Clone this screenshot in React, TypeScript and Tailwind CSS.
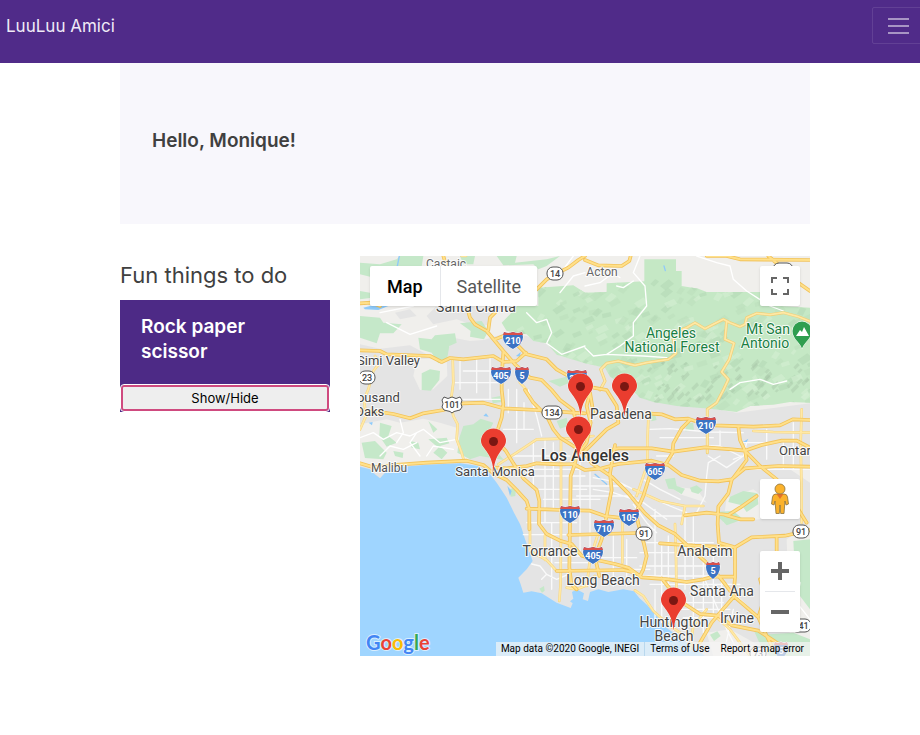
import React from "react";

/* ---------- Map geometry (drawn on a 1350 x 1200 plane) ---------- */

const OCEAN =
  "M0 632 L30 640 45 655 60 667 80 645 130 632 200 626 300 622 355 630 385 648 410 680 440 725 462 770 480 804 486 820 495 850 508 885 518 915 500 940 475 965 482 985 490 1010 515 1006 545 1012 590 1040 632 1056 638 1042 630 1036 640 1028 636 1008 650 1000 672 1012 668 1030 684 1035 690 1008 715 1000 745 1008 790 1000 822 1006 838 1026 862 1048 890 1080 915 1112 940 1130 975 1158 1010 1180 1035 1200 0 1200Z";

const FOREST =
  "M535 95 L640 88 675 110 740 108 740 82 853 76 853 10 948 10 948 45 965 45 965 90 1015 98 1040 108 1200 108 1260 150 1350 155 1350 440 1290 438 1240 446 1170 450 1130 468 1050 458 950 450 880 438 840 425 815 402 780 380 750 362 735 335 675 322 620 305 590 296 560 262 520 255 500 235 440 225 425 200 450 175 480 140 535 150Z";

const PARKS = [
  "M0 20 L60 25 110 10 120 0 190 0 185 32 110 38 60 70 0 55Z",
  "M300 0 L345 0 340 25 310 25Z",
  "M410 0 L470 0 465 20 560 10 600 0 560 30 535 40 520 25 430 28Z",
  "M0 180 L60 185 70 200 125 205 100 232 60 232 50 262 0 245Z",
  "M175 245 L215 250 225 238 285 232 290 260 268 270 262 305 235 322 215 290 180 280Z",
  "M300 202 L365 195 385 225 372 250 330 242 332 225Z",
  "M185 352 L210 340 240 345 238 372 212 404 185 402Z",
  "M0 105 L30 110 30 126 0 130Z",
  "M310 510 L340 505 362 488 400 500 385 530 412 590 432 612 360 600 330 610 292 590 298 545Z",
  "M5 560 L45 555 80 590 70 610 15 606Z",
  "M60 500 L95 510 85 540 110 560 80 572 58 540Z",
  "M150 555 L175 560 180 580 155 575Z",
  "M205 495 L232 520 220 530Z",
  "M205 550 L260 545 268 562 240 570 262 590 245 610 220 590 235 575Z",
  "M100 585 L130 590 128 606 105 600Z",
  "M395 425 L420 420 425 438 398 442Z",
  "M565 375 L620 362 640 375 600 392Z",
  "M590 495 L620 485 625 510 600 518Z",
  "M915 670 L945 665 950 690 975 698 965 715 940 700 925 698Z",
  "M990 695 L1010 688 1028 702 1015 714 995 708Z",
  "M982 502 L1000 500 1002 524 975 526Z",
  "M1110 722 L1150 705 1192 712 1195 745 1160 768 1145 748 1105 738Z",
  "M1060 768 L1120 765 1150 790 1100 808Z",
  "M1300 855 L1350 850 1350 1060 1320 1020 1305 950Z",
  "M1050 1136 L1072 1126 1082 1140 1062 1155Z",
  "M538 998 L552 990 554 1004 546 1010Z",
  "M1180 1120 L1230 1135 1300 1130 1350 1150 1350 1200 1230 1200 1200 1165Z",
  "M870 480 L885 475 890 492 875 496Z",
  "M450 700 L468 692 466 720 452 722Z",
];

const URBAN = [
  "M0 265 L60 278 150 268 210 300 260 290 280 245 330 255 372 252 440 230 500 240 560 265 600 300 735 335 830 418 1130 470 1350 442 1350 1200 0 1200Z",
  "M230 150 L300 165 330 150 400 175 385 205 360 215 290 190 220 205 200 180Z",
  "M105 170 L150 160 170 180 120 190Z",
];

const TERRAIN = [
  "M0 505 L80 490 120 500 190 488 240 500 290 515 300 560 330 612 240 622 100 630 0 628Z",
  "M170 310 L260 305 262 360 220 400 180 402 160 360Z",
  "M930 690 L1010 700 1040 740 960 715Z",
  "M1100 725 L1180 700 1230 740 1200 790 1090 800Z",
  "M1290 640 L1350 640 1350 680Z",
  "M1040 1130 L1110 1120 1200 1170 1200 1200 1060 1200Z",
  "M1280 850 L1350 800 1350 1200 1290 1160Z",
];

const STREETS =
  "M285 380 H430 M300 310 V400 M350 310 V410 M390 305 V430 M300 430 H420 M310 345 H400 M445 400 V470 M470 400 V560 M430 520 H520 M492 440 V520 M505 402 L530 480 545 540 M450 600 H630 M480 640 H675 M520 560 V700 M555 550 V800 M580 560 V760 M500 660 H675 M520 700 H680 M550 730 H720 M500 800 H650 M660 620 V900 M690 640 V880 M640 690 H800 M650 720 H820 M490 836 H620 M575 800 V1000 M515 924 L540 930 560 955 590 970 625 955 M560 900 H660 M585 920 H700 M545 970 L560 955 M700 665 L780 680 850 715 930 750 980 770 M700 700 L760 710 850 740 920 790 M850 670 L900 700 960 730 M820 745 L860 800 890 830 M870 780 H990 M885 760 V960 M860 860 H1060 M840 890 H1040 M840 930 H1080 M820 960 H1110 M870 985 H1140 M885 1000 V1090 M905 870 V1100 M925 840 V1040 M975 780 V1000 M1000 770 V1100 M1030 870 V1130 M1060 880 V1080 M1085 960 V1060 M960 1040 H1090 M950 1060 H1110 M970 1085 H1080 M1110 1000 L1160 1050 M1040 660 L1045 620 1080 600 M1040 660 L1035 720 1010 770 M1045 600 L1100 635 1150 600 M870 520 L930 518 1050 528 1150 530 M1080 525 V570 L1140 600 M1080 570 L1040 570 M1120 610 L1145 600 M1160 560 L1150 600 M1160 640 H1350 M1220 520 V610 M1270 640 V560 M1300 500 V640 M1150 560 H1240 M900 545 H1060 M890 600 H940 M1030 960 L1100 1120 1130 1180 M1120 1060 L1090 1200 M675 905 H830 M760 840 V990 M800 850 V990 M700 940 H870";

const TRAILS =
  "M840 0 L820 50 855 90 860 150 820 200 820 240 780 270 740 295 700 300 675 275 M820 75 L790 95 770 90 M1010 0 L1070 20 1110 30 1120 70 1160 105 1230 150 1270 165 M675 90 L720 80 760 50 780 65 M740 295 L850 300 920 305 M500 170 L530 200 560 190 575 230 560 262 605 295 675 270 M1110 400 L1140 380 1200 370 1240 385 1280 375 M600 110 L640 60 675 50 M610 40 L640 0 M0 545 L40 530 70 550 110 530 150 540 190 520 240 560 290 550 M60 600 L90 570 130 580 170 560 M120 490 L130 530 110 560 M170 530 L150 560 180 600 M200 600 L220 570 280 580 M1290 940 L1320 980 1310 1040 1350 1090 M80 200 L150 235 230 210 M60 170 L160 150";

const MINOR = [
  "M318 0 L305 0",
  "M45 300 L60 320 40 345 25 400 12 430 18 480 0 520",
  "M278 306 L280 380 272 440 280 480 293 505 290 550 305 590 312 615",
  "M500 402 L480 380 470 330",
  "M415 625 L470 590 530 550 640 547 700 540",
  "M603 552 V804 L602 980 598 1035",
  "M510 804 V885 L560 912 590 945 630 945",
  "M555 838 V912",
  "M620 995 L650 1000 675 990 705 960",
  "M865 490 L862 560 862 625 830 720",
  "M787 780 V920",
  "M945 804 L948 900 950 1060",
  "M1040 1060 L1000 1110 990 1180",
  "M1065 1080 L1110 1120 1170 1200",
  "M712 840 L690 910 680 990",
  "M1325 460 L1322 560 1325 720 1325 800",
  "M1180 525 L1240 528 1350 530",
  "M820 700 L900 735 975 750 1030 750 M975 750 L965 804",
  "M825 1003 L850 1020 880 1065 930 1110 960 1130",
];

const MOUNTAIN =
  "M720 402 L735 375 722 340 740 322 775 315 800 322 825 328 860 320 925 310 948 292 940 250 955 225 980 215 1005 200 1035 218 1060 205 1090 190 1110 200 1140 212 1155 205 1160 185 1190 172 1230 176 1270 170 1315 182 1350 196 M1100 196 L1095 250 1122 262 1108 310 1085 348 1105 370 1090 402 1070 440 1042 460 1042 590";

const HIGHWAYS = [
  "M250 0 L262 40 290 100 320 150 330 185 345 205 380 225 405 255 430 285 465 325 510 365 545 372 575 402 600 432 640 462 650 510 675 545",
  "M0 283 L60 285 80 295 210 300 245 318 270 306 310 310 400 300 430 318 470 315 498 290",
  "M0 142 L35 140 60 150",
  "M675 0 L655 12 625 35 590 52 560 70 530 100 M405 170 L390 185 385 222",
  "M675 12 L715 28 785 30 808 15 812 0",
  "M1040 0 L1100 0 1140 10 1350 12",
  "M1225 0 L1260 30 1300 70 1350 105",
  "M405 250 L430 240 465 260 500 295 560 310 590 340 625 360 665 385 690 410 700 470 M860 472 L905 475 945 490 985 488 1020 500 1060 508 1180 512 1260 508 1298 490 1350 492",
  "M700 395 L740 402 770 450 775 500",
  "M430 290 L425 360 425 402 430 445 425 485 412 525 415 560 437 584 460 622 490 667 530 702 538 735 537 804 560 834 600 854 635 864 665 899 710 912 765 924 805 935 845 964 925 970 980 978 1030 970 1060 962 1120 962",
  "M905 967 L935 1005 975 1045 1020 1074 1075 1079 1115 1108 1195 1124 1235 1150 1280 1180",
  "M0 462 L60 468 100 474 150 487 190 472 250 462 310 442 370 440 430 457 530 462 640 470 675 472",
  "M0 622 L40 634 100 627 200 620 320 614 370 627 400 652 440 672 470 702 500 735 508 760 508 820",
  "M405 635 L440 637 500 630 530 622 600 625 640 624 675 642 725 637 775 624 875 614 925 627 965 657 1020 674 1075 676 1115 670 1155 637 1255 630 1350 632",
  "M760 580 L775 577 875 577 940 587 1035 574 1115 580 1155 584 1205 567 1265 554 1310 554 1350 575",
  "M990 492 L965 517 940 562 937 592 915 627 870 657 850 720 828 770 835 804 852 864 860 900 850 940 840 960",
  "M1135 512 L1140 552 1155 584 1160 612 1115 672 1105 712 1075 752 1073 804 1077 860 1120 872",
  "M1155 584 L1200 630 1250 670 1290 720 1340 800",
  "M625 837 L830 831 M900 862 L1005 869 1125 874 1175 844 1275 839 1350 822",
  "M495 402 L520 440 560 480 580 520 600 545 640 570 680 600 695 622 755 662 805 712 855 772 895 808 945 834 1005 889 1055 934 1095 984 1125 1024 1195 1084 1220 1140 1240 1180",
  "M690 410 L680 450 692 500 680 560 650 600 642 632 632 660 630 804 628 934 634 984 650 1000",
  "M775 500 L740 520 700 560 670 590",
  "M765 567 L750 652 755 702 745 752 735 804 725 850 705 904 718 960",
  "M500 758 L560 760 605 762 690 764 735 780 795 787",
  "M975 778 L1040 770 1105 777 1140 755 1190 720",
  "M590 945 L790 942 825 950",
  "M1125 874 L1125 964 1120 1024 1080 1070 1055 1100 1020 1160",
  "M1250 845 V950 M1195 1084 L1215 1020 1200 970",
  "M1095 777 L1140 790 1180 790",
];

/* Relief facets scattered over the forest */
const RELIEF = Array.from({ length: 260 }, (_, i) => {
  const x = 440 + ((i * 137) % 910);
  const y = 70 + ((i * 89 + i * i * 3) % 390);
  const a = 10 + ((i * 17) % 22);
  const b = 6 + ((i * 11) % 16);
  return {
    d: `M${x} ${y} l${a} ${-b} l${b - 4} ${a / 2} l${-a} ${b}Z`,
    fill: i % 3 === 0 ? "#d4eed2" : i % 3 === 1 ? "#b4d9b5" : "#bcdfbd",
  };
});

const SHADOWS = Array.from({ length: 60 }, (_, i) => {
  const x = 860 + ((i * 97 + i * i * 7) % 480);
  const y = 320 + ((i * 41 + i * i * 5) % 125);
  const a = 6 + ((i * 13) % 14);
  return `M${x} ${y} l${a} ${-a} l6 ${a / 2} l${-a} ${a}Z`;
});

/* ---------- Map parts ---------- */

type Place = { x: number; y: number; text: string; size?: number; fill?: string; weight?: number; anchor?: "start" | "middle" };

const PLACES: Place[] = [
  { x: 86, y: 12, text: "Castaic", size: 12, fill: "#666666" },
  { x: 116, y: 56, text: "Santa Clarita", size: 14 },
  { x: 242, y: 20, text: "Acton", size: 12, fill: "#666666" },
  { x: 311, y: 82, text: "Angeles", fill: "#1a7f43", size: 14 },
  { x: 312, y: 96, text: "National Forest", fill: "#1a7f43", size: 14 },
  { x: 408, y: 78, text: "Mt San", fill: "#1a7f43", size: 14 },
  { x: 405, y: 92, text: "Antonio", fill: "#1a7f43", size: 14 },
  { x: -3, y: 109, text: "Simi Valley", size: 13, anchor: "start" },
  { x: -18, y: 146, text: "Thousand", size: 13, anchor: "start" },
  { x: -5, y: 160, text: "Oaks", size: 13, anchor: "start" },
  { x: 29, y: 216, text: "Malibu", size: 12, fill: "#555555" },
  { x: 135, y: 220, text: "Santa Monica", size: 13 },
  { x: 261, y: 163, text: "Pasadena", size: 14 },
  { x: 225, y: 205, text: "Los Angeles", size: 16, weight: 500, fill: "#333333" },
  { x: 419, y: 199, text: "Ontario", anchor: "start", size: 13 },
  { x: 190, y: 300, text: "Torrance", size: 14 },
  { x: 345, y: 300, text: "Anaheim", size: 14 },
  { x: 243, y: 329, text: "Long Beach", size: 14 },
  { x: 362, y: 340, text: "Santa Ana", size: 14 },
  { x: 377, y: 367, text: "Irvine", size: 14 },
  { x: 314, y: 371, text: "Huntington", size: 14 },
  { x: 314, y: 385, text: "Beach", size: 14 },
];

const INTERSTATES = [
  { x: 153, y: 84, n: "210" },
  { x: 141, y: 119, n: "405" },
  { x: 162, y: 119, n: "5" },
  { x: 217, y: 122, n: "210" },
  { x: 346, y: 169, n: "210" },
  { x: 295, y: 215, n: "605" },
  { x: 210, y: 258, n: "110" },
  { x: 269, y: 261, n: "105" },
  { x: 244, y: 272, n: "710" },
  { x: 233, y: 299, n: "405" },
  { x: 353, y: 314, n: "5" },
  { x: 421, y: 394, n: "5" },
];

const STATE_ROUTES = [
  { x: 195, y: 17, n: "14" },
  { x: 423, y: 13, n: "138" },
  { x: 7, y: 121, n: "23" },
  { x: 192, y: 156, n: "134" },
  { x: 284, y: 277, n: "91" },
  { x: 441, y: 275, n: "91" },
  { x: 441, y: 369, n: "241" },
  { x: 398, y: 397, n: "73" },
];

function Interstate({ x, y, n }: { x: number; y: number; n: string }) {
  const w = n.length > 1 ? 10 : 7;
  return (
    <g transform={`translate(${x} ${y})`}>
      <path
        d={`M${-w + 1} -8 Q${-w / 2} -6 0 -8 Q${w / 2} -6 ${w - 1} -8 L${w} -3 Q${w} 4 0 9 Q${-w} 4 ${-w} -3Z`}
        fill="#3b73c4"
        stroke="#ffffff"
        strokeWidth="1"
        paintOrder="stroke"
      />
      <path d={`M${-w + 1} -8 Q${-w / 2} -6 0 -8 Q${w / 2} -6 ${w - 1} -8 L${w} -5 H${-w}Z`} fill="#d9504c" />
      <text y="4" textAnchor="middle" fontSize="9" fontWeight="700" fill="#ffffff">
        {n}
      </text>
    </g>
  );
}

function StateRoute({ x, y, n }: { x: number; y: number; n: string }) {
  const w = n.length > 2 ? 20 : 16;
  return (
    <g transform={`translate(${x} ${y})`}>
      <rect x={-w / 2} y="-6" width={w} height="13" rx="6" fill="#ffffff" stroke="#555555" />
      <text y="4" textAnchor="middle" fontSize="9" fontWeight="500" fill="#444444">
        {n}
      </text>
    </g>
  );
}

function Pin({ x, y }: { x: number; y: number }) {
  return (
    <g transform={`translate(${x} ${y})`}>
      <path
        d="M0.500 2 C-0.500 -11 -4 -15 -7.500 -20 C-10.500 -24 -12 -26 -12 -29 A12.500 12.500 0 0 1 13 -29 C13 -26 11.500 -24 8.500 -20 C5 -15 1.500 -11 0.500 2Z"
        fill="#ea3d2f"
        stroke="#ffffff"
        strokeOpacity="0.7"
        strokeWidth="1"
        paintOrder="stroke"
      />
      <circle cx="0.500" cy="-28.500" r="4.500" fill="#7a1712" />
    </g>
  );
}

function MapCanvas() {
  return (
    <svg
      viewBox="0 0 450 400"
      preserveAspectRatio="xMidYMid slice"
      className="block h-full w-full font-[Roboto,'Liberation_Sans',sans-serif]"
      role="img"
      aria-label="Map of Los Angeles"
    >
      <defs>
        <clipPath id="forest">
          <path d={FOREST} />
        </clipPath>
      </defs>
      <g transform="scale(0.33333)" strokeLinejoin="round" strokeLinecap="round" fill="none">
        <rect width="1350" height="1200" fill="#f0efec" />
        {URBAN.map((d) => (
          <path key={d} d={d} fill="#e4e4e4" />
        ))}
        {TERRAIN.map((d) => (
          <path key={d} d={d} fill="#f0efec" />
        ))}
        {PARKS.map((d) => (
          <path key={d} d={d} fill="#c5e8c9" />
        ))}
        <path d={FOREST} fill="#c5e8c5" />
        <g clipPath="url(#forest)">
          {RELIEF.map((r) => (
            <path key={r.d} d={r.d} fill={r.fill} opacity="0.6" />
          ))}
          {SHADOWS.map((d) => (
            <path key={d} d={d} fill="#a6c3a4" opacity="0.4" />
          ))}
        </g>
        <path d={OCEAN} fill="#9fd5ff" />
        <path
          d="M10 155 L50 145 85 150 55 162 15 160Z M370 480 L378 472 386 482Z M468 300 L482 288 480 302Z M442 690 L455 705 450 720Z M1145 560 L1165 548 1158 562Z M26 500 L38 498 36 508Z"
          fill="#8fcbfa"
        />
        <path d="M118 0 L112 30 125 55 M705 655 L740 685 M912 30 L916 44" stroke="#90caf9" strokeWidth="4" />
        <path d={TRAILS} stroke="#ffffff" strokeWidth="4" />
        <path d={STREETS} stroke="#fafafa" strokeWidth="4" />
        <path d={MOUNTAIN} stroke="#f0cf78" strokeWidth="9" />
        <path d={MOUNTAIN} stroke="#ffe8a4" strokeWidth="5" />
        <path d={MINOR.join(" ")} stroke="#f6d582" strokeWidth="8" />
        <path d={MINOR.join(" ")} stroke="#ffe9a6" strokeWidth="5" />
        <path d={HIGHWAYS.join(" ")} stroke="#f2c35b" strokeWidth="11" />
        <path d={HIGHWAYS.join(" ")} stroke="#ffe08a" strokeWidth="6" />
      </g>

      {INTERSTATES.map((s) => (
        <Interstate key={`${s.x}-${s.y}`} {...s} />
      ))}
      {STATE_ROUTES.map((s) => (
        <StateRoute key={`${s.x}-${s.y}`} {...s} />
      ))}
      <g transform="translate(92 149)">
        <path
          d="M-8 -8 Q-4 -5 0 -8 Q4 -5 8 -8 L10 -5 Q8 -1 10 2 Q9 6 4 6 Q2 6 0 8 Q-2 6 -4 6 Q-9 6 -10 2 Q-8 -1 -10 -5Z"
          fill="#ffffff"
          stroke="#555555"
        />
        <text y="3" textAnchor="middle" fontSize="9" fontWeight="500" fill="#444444">
          101
        </text>
      </g>

      {PLACES.map((p) => (
        <text
          key={p.text}
          x={p.x}
          y={p.y}
          textAnchor={p.anchor ?? "middle"}
          fontSize={p.size ?? 13}
          fontWeight={p.weight ?? 400}
          fill={p.fill ?? "#444444"}
          stroke="#ffffff"
          strokeOpacity="0.85"
          strokeWidth="2"
          strokeLinejoin="round"
          paintOrder="stroke"
        >
          {p.text}
        </text>
      ))}

      <g transform="translate(442 93)">
        <path
          d="M0 0 C-1 -6 -9.500 -10 -9.500 -18 A9.500 9.500 0 0 1 9.500 -18 C9.500 -10 1 -6 0 0Z"
          fill="#2f9e4f"
          stroke="#ffffff"
          strokeWidth="1"
          paintOrder="stroke"
        />
        <path d="M-6 -13 L-2 -19 0 -17 2 -22 7 -13Z" fill="#ffffff" />
      </g>

      <Pin x={220} y={159} />
      <Pin x={264} y={159} />
      <Pin x={218} y={202} />
      <Pin x={133} y={214} />
      <Pin x={313} y={373} />
    </svg>
  );
}

function MapPanel() {
  const control = "flex h-10 w-10 items-center justify-center rounded-xs bg-white shadow-sm";
  return (
    <section
      aria-label="Map"
      className="relative h-[400px] overflow-hidden bg-[#e4e4e4] font-[Roboto,'Liberation_Sans',sans-serif]"
    >
      <MapCanvas />

      <div className="absolute top-[10px] left-[10px] flex h-10 rounded-xs bg-white text-lg shadow-sm">
        <button type="button" className="px-[17px] pt-[2px] font-medium text-black">
          Map
        </button>
        <button type="button" className="border-l border-gray-200 px-4 pt-[2px] text-[#565656]">
          Satellite
        </button>
      </div>

      <button type="button" aria-label="Toggle fullscreen view" className={`absolute top-[10px] right-[10px] ${control}`}>
        <svg viewBox="0 0 18 18" className="h-[18px] w-[18px]" fill="#666666">
          <path d="M0 0v6h2V2h4V0H0zm16 0h-4v2h4v4h2V0h-2zm0 16h-4v2h6v-6h-2v4zM2 12H0v6h6v-2H2v-4z" />
        </svg>
      </button>

      <div className="absolute right-[10px] bottom-6 flex flex-col gap-8">
        <button type="button" aria-label="Street View" className={control}>
          <svg viewBox="0 0 18 32" className="h-8 w-[18px]">
            <path
              d="M5 11 H13 Q16 11 16.500 14 L17.500 21 L15 22 L14 18 L13 30.500 H9.700 L9 22 L8.300 30.500 H5 L4 18 L3 22 L0.500 21 L1.500 14 Q2 11 5 11Z"
              fill="#fbb22c"
              stroke="#8a7440"
              strokeWidth="0.800"
            />
            <path d="M5.500 11 H12.500 L9 16Z" fill="#e3702c" />
            <circle cx="9" cy="6" r="5" fill="#fbb22c" stroke="#8a7440" strokeWidth="0.800" />
          </svg>
        </button>
        <div className="flex flex-col rounded-xs bg-white shadow-sm">
          <button type="button" aria-label="Zoom in" className="flex h-10 w-10 items-center justify-center">
            <svg viewBox="0 0 18 18" className="h-[18px] w-[18px]" fill="#666666">
              <path d="M0 7h7V0h4v7h7v4h-7v7H7v-7H0z" />
            </svg>
          </button>
          <div className="mx-[5px] h-px bg-gray-200" />
          <button type="button" aria-label="Zoom out" className="flex h-10 w-10 items-center justify-center">
            <svg viewBox="0 0 18 18" className="h-[18px] w-[18px]" fill="#666666">
              <path d="M0 7h18v4H0z" />
            </svg>
          </button>
        </div>
      </div>

      <a
        href="#google"
        aria-label="Google"
        className="absolute bottom-0 left-[6px] font-[Lato,'Liberation_Sans',sans-serif] text-[20px] leading-7 font-bold [paint-order:stroke] [-webkit-text-stroke:2px_#d9eefe]"
      >
        <span className="text-[#4285f4]">G</span>
        <span className="text-[#ea4335]">o</span>
        <span className="text-[#fbbc05]">o</span>
        <span className="text-[#4285f4]">g</span>
        <span className="text-[#34a853]">l</span>
        <span className="text-[#ea4335]">e</span>
      </a>

      <div className="absolute right-0 bottom-0 flex h-[14px] items-center bg-[#f5f5f5]/70 text-[10px] leading-[14px] text-black">
        <span className="px-[5px]">Map data ©2020 Google, INEGI</span>
        <a href="#terms" className="border-l border-[#b9d8ee] px-[5px]">
          Terms of Use
        </a>
        <a href="#report" className="px-[6px]">
          Report a map error
        </a>
      </div>
    </section>
  );
}

export default function App() {
  return (
    <div className="min-h-screen overflow-x-hidden bg-white font-[Inter,'Liberation_Sans',sans-serif] text-[#404040]">
      <nav className="flex items-start justify-between bg-[#502b89] pt-[7px] pb-[17px] pl-[6px]">
        <a href="#home" className="text-[17px] leading-[39px] text-[#efeaf6]">
          LuuLuu Amici
        </a>
        <button
          type="button"
          aria-label="Toggle navigation"
          className="-mr-2 flex h-[37px] w-14 items-center rounded-xs border border-white/10 pl-[10px]"
        >
          <svg viewBox="0 0 30 30" className="h-[30px] w-[30px]" stroke="#ffffff" strokeOpacity="0.5" strokeWidth="2">
            <path d="M5 8h21M5 15h21M5 22h21" />
          </svg>
        </button>
      </nav>

      <main className="mr-[110px] ml-[120px]">
        <header className="bg-[#f8f7fc] px-8 pt-[65px] pb-[71px]">
          <h1 className="text-[19px] leading-[25px] font-semibold">Hello, Monique!</h1>
        </header>

        <div className="mt-8 grid grid-cols-[210px_minmax(0,1fr)] items-start gap-[30px]">
          <section className="pt-[3px]">
            <h2 className="mb-[9px] text-[22px] leading-8">Fun things to do</h2>
            <article className="bg-[#4d2a86] px-px pb-px">
              <h3 className="px-5 pt-[14px] pb-5 text-[19px] leading-[25px] font-semibold text-white">
                Rock paper scissor
              </h3>
              <button
                type="button"
                className="mt-px block h-[26px] w-full rounded-[3px] border-2 border-[#cf4a7f] bg-[#eeeeee] text-[13px] leading-[22px] text-black outline-1 outline-white"
              >
                Show/Hide
              </button>
            </article>
          </section>

          <MapPanel />
        </div>
      </main>
    </div>
  );
}
